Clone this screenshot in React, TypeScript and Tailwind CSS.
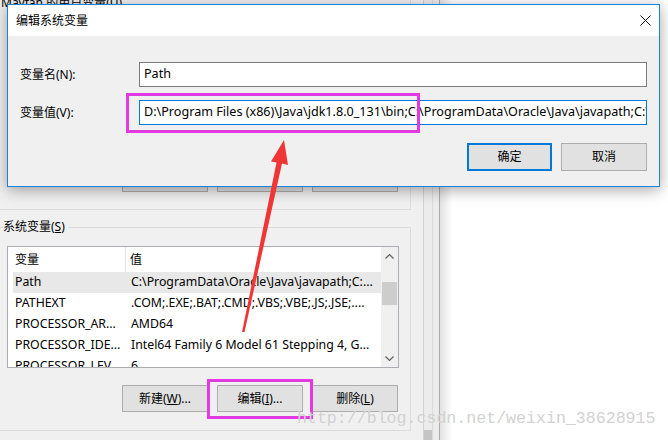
import React from 'react';

const ui = "font-['Noto_Sans','Noto_Sans_CJK_SC',sans-serif] text-[12px] text-black";

type BtnProps = { children: React.ReactNode; className?: string };

const WinButton: React.FC<BtnProps> = ({ children, className = '' }) => (
  <div className={`flex items-center justify-center border bg-[#e1e1e1] ${className}`}>{children}</div>
);

const rows = [
  { name: 'Path', value: 'C:\\ProgramData\\Oracle\\Java\\javapath;C:...', selected: true },
  { name: 'PATHEXT', value: '.COM;.EXE;.BAT;.CMD;.VBS;.VBE;.JS;.JSE;....' },
  { name: 'PROCESSOR_AR...', value: 'AMD64' },
  { name: 'PROCESSOR_IDE...', value: 'Intel64 Family 6 Model 61 Stepping 4, G...' },
  { name: 'PROCESSOR_LEV...', value: '6' },
];

const Chevron: React.FC<{ down?: boolean }> = ({ down }) => (
  <svg width="9" height="6" viewBox="0 0 9 6">
    <polyline
      points={down ? '0.5,0.5 4.5,4.5 8.5,0.5' : '0.5,5.5 4.5,1.5 8.5,5.5'}
      fill="none"
      stroke="#606060"
      strokeWidth="1.2"
    />
  </svg>
);

const ListView = () => (
  <div className="ml-[7px] mt-[11px] w-[392px] h-[122px] border border-[#abadb3] bg-white flex overflow-hidden">
    <div className="flex-1 flex flex-col">
      <div className="h-[25px] shrink-0 flex">
        <div className="w-[118px] pl-[7px] flex items-center border-r border-[#e5e5e5]">变量</div>
        <div className="flex-1 pl-[4px] flex items-center">值</div>
      </div>
      {rows.map((r) => (
        <div
          key={r.name}
          className={`ml-[5px] h-[21px] shrink-0 flex items-center whitespace-nowrap text-[12.3px] ${r.selected ? 'bg-[#e8e8e8]' : ''}`}
        >
          <div className="w-[113px] pl-[2px] overflow-hidden">{r.name}</div>
          <div className="flex-1 pl-[5px] overflow-hidden">{r.value}</div>
        </div>
      ))}
    </div>
    <div className="w-[17px] bg-[#f0f0f0] flex flex-col">
      <div className="h-[17px] flex items-center justify-center">
        <Chevron />
      </div>
      <div className="flex-1 px-[1px]">
        <div className="mt-[18px] h-[23px] bg-[#cdcdcd]" />
      </div>
      <div className="h-[17px] flex items-center justify-center">
        <Chevron down />
      </div>
    </div>
  </div>
);

export default function App() {
  return (
    <div className={`relative w-[668px] h-[440px] overflow-hidden bg-white flex ${ui}`}>
      {/* background window: 环境变量 */}
      <div className="w-[423px] h-full bg-[#f0f0f0] flex flex-col">
        <div className="w-[411px] h-[210px] shrink-0 border-r border-b border-[#dcdcdc] flex flex-col justify-between">
          <div className="-mt-[5px] pl-[1px] leading-[16px] whitespace-nowrap">
            Mayfan 的用户变量(<span className="underline">U</span>)
          </div>
          <div className="flex justify-end gap-[9px] pr-[12px] pb-[17px]">
            <WinButton className="w-[86px] h-[27px] border-[#adadad]">新建(N)...</WinButton>
            <WinButton className="w-[86px] h-[27px] border-[#adadad]">编辑(E)...</WinButton>
            <WinButton className="w-[86px] h-[27px] border-[#adadad]">删除(D)</WinButton>
          </div>
        </div>
        <fieldset className="mt-[9px] w-[411px] border border-l-0 border-[#dcdcdc]">
          <legend className="ml-[3px] pr-[3px] leading-[16px]">
            系统变量(<span className="underline">S</span>)
          </legend>
          <ListView />
          <div className="mt-[17px] pb-[18px] flex justify-end gap-[9px] pr-[12px]">
            <WinButton className="w-[86px] h-[27px] border-[#adadad]">
              新建(<span className="underline">W</span>)...
            </WinButton>
            <WinButton className="w-[86px] h-[27px] border-[#adadad]">
              编辑(<span className="underline">I</span>)...
            </WinButton>
            <WinButton className="w-[86px] h-[27px] border-[#adadad]">
              删除(<span className="underline">L</span>)
            </WinButton>
          </div>
        </fieldset>
      </div>

      {/* window frame strip */}
      <div className="w-[17px] h-full border-l border-r border-l-[#d2d2d2] border-r-[#acacac] bg-[#ececec] flex">
        <div className="w-[9px] h-full border-r border-[#dadada] flex flex-col justify-end">
          <div className="h-[10px] bg-[#c4c4c4]" />
        </div>
      </div>
      <div className="flex-1 h-full flex">
        <div className="w-[12px] h-full bg-linear-to-r from-[#e2e2e2] to-white" />
      </div>

      {/* 编辑系统变量 dialog */}
      <div className="absolute left-[7px] top-[4px] w-[653px] h-[183px] border border-[#1883d7] bg-[#f0f0f0] shadow-[0_3px_14px_rgba(0,0,0,0.35)] flex flex-col">
        <div className="h-[31px] shrink-0 bg-white flex items-center justify-between pl-[8px] pr-[8px]">
          <span>编辑系统变量</span>
          <svg width="11" height="11" viewBox="0 0 11 11">
            <path d="M0.5 0.5 L10.5 10.5 M10.5 0.5 L0.5 10.5" stroke="#111" strokeWidth="1" />
          </svg>
        </div>
        <div className="flex flex-col px-[12px] pt-[26px]">
          <div className="flex items-center">
            <div className="w-[119px]">变量名(N):</div>
            <div className="flex-1 h-[25px] border border-[#7a7a7a] bg-white pl-[4px] flex items-center text-[12.6px]">
              Path
            </div>
          </div>
          <div className="mt-[13px] flex items-center">
            <div className="w-[119px]">变量值(V):</div>
            <div className="flex-1 h-[25px] border border-[#0078d7] bg-white pl-[4px] flex items-center overflow-hidden whitespace-nowrap text-[12.6px]">
              <span>{'D:\\Program Files (x86)\\Java\\jdk1.8.0_131\\bin;'}</span>
              <span className="inline-block w-px h-[15px] bg-black" />
              <span>{'C:\\ProgramData\\Oracle\\Java\\javapath;C:\\Windows\\system32;C:\\Windows'}</span>
            </div>
          </div>
          <div className="mt-[18px] flex justify-end gap-[9px]">
            <WinButton className="w-[85px] h-[28px] border-2 border-[#0078d7]">确定</WinButton>
            <WinButton className="w-[86px] h-[28px] border-[#adadad]">取消</WinButton>
          </div>
        </div>
      </div>

      {/* annotations */}
      <div className="absolute left-[126px] top-[93px] w-[294px] h-[40px] border-[3px] border-[#e23ae2]" />
      <div className="absolute left-[207px] top-[379px] w-[106px] h-[40px] border-[3px] border-[#e23ae2]" />
      <svg className="absolute left-0 top-0 pointer-events-none" width="668" height="440" viewBox="0 0 668 440">
        <polygon
          points="284,140 288,165 282,163.5 244.5,332 242,332 276.5,162.5 271,161.5"
          fill="#ef3535"
        />
      </svg>
      <div className="absolute left-[297px] top-[408px] font-['Liberation_Mono',monospace] text-[16.6px] leading-[22px] text-[#d2d2d2] whitespace-nowrap">
        http://blog.csdn.net/weixin_38628915
      </div>
    </div>
  );
}
